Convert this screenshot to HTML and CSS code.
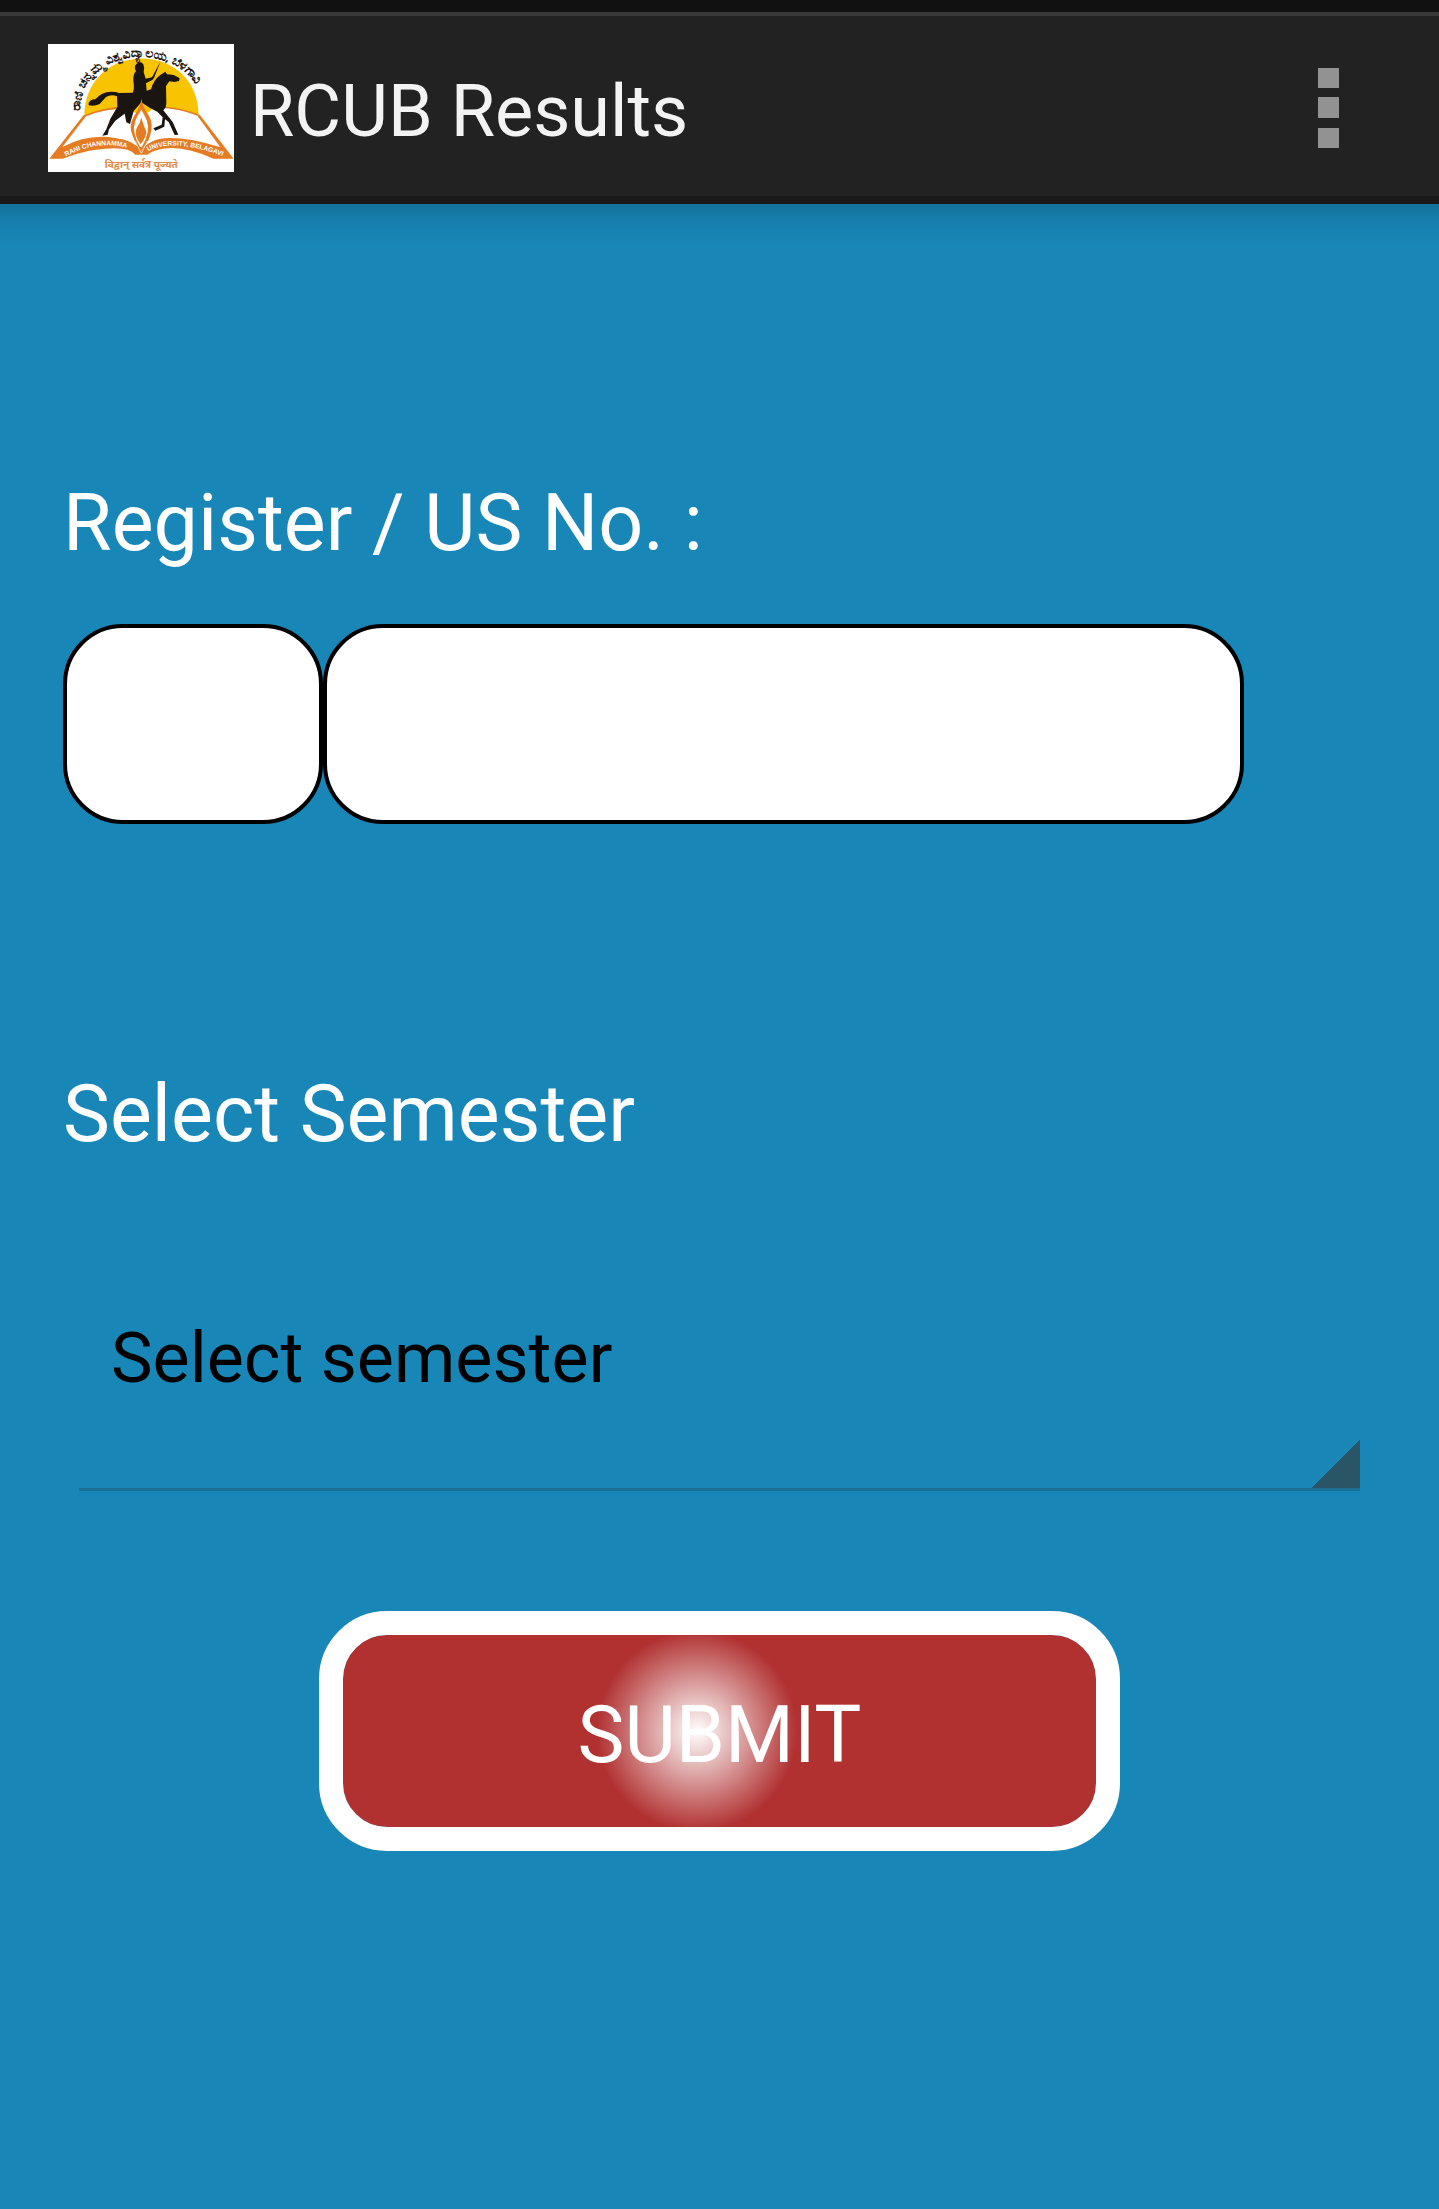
FILE: index.html
```html
<!DOCTYPE html>
<html lang="en">
<head>
  <meta charset="UTF-8">
  <meta name="viewport" content="width=device-width, initial-scale=1">
  <title>RCUB Results</title>
  <link rel="stylesheet" href="styles.css">
</head>
<body>
  <div class="status-bar"></div>
  <header class="action-bar">
    <svg class="logo" viewBox="24 24 558 384" role="img" aria-label="Rani Channamma University Belagavi">
      <defs>
        <path id="arcTop" d="M120 224 C122 8 486 8 492 232"/>
        <path id="pageLeft" d="M78 362 Q180 304 288 344"/>
        <path id="pageRight" d="M324 346 Q400 304 552 362"/>
      </defs>
      <rect x="24" y="24" width="558" height="384" fill="#fff"/>
      <!-- sun -->
      <path d="M133 240 C136 10 474 10 476 238 Q380 205 304 236 Q220 205 133 240 Z" fill="#f8c300"/>
      <!-- book -->
      <path d="M133 240 L28 368 H68 Q165 325 235 336 Q270 342 286 356 H322 Q350 336 396 336 Q460 340 520 368 H580 L476 238 Q410 212 340 215 L304 250 L260 222 Q195 216 133 240 Z" fill="#fff"/>
      <path d="M133 240 Q195 214 262 214 M348 214 Q410 212 476 238" fill="none" stroke="#e57c23" stroke-width="5"/>
      <path d="M28 368 L131 237 L138 241 L67 333 Q145 292 225 306 Q280 312 304 344 Q330 306 388 306 Q455 306 541 334 L472 239 L479 236 L581 368 H520 Q450 336 396 336 Q350 336 322 356 H286 Q270 337 222 337 Q150 337 68 368 Z" fill="#e57c23"/>
      <!-- horse and rider -->
      <path d="M146 201 Q150 191 166 190 Q184 168 214 167 Q228 167 237 171 L278 170 Q284 160 280 135 Q279 113 288 106 Q280 92 290 83 Q303 74 310 85 Q315 98 311 108 L317 128 L336 124 L362 76 L342 126 L337 132 L318 142 L320 164 L333 160 Q341 131 361 117 L376 107 L381 115 Q399 116 407 120 L419 127 L417 135 L403 138 L388 136 L378 150 L379 198 Q380 213 370 223 L398 258 L415 296 L404 297 L386 258 L375 250 L373 272 L346 284 L340 277 L365 266 L368 244 L352 227 L330 216 L304 199 L281 225 L270 264 L259 259 L254 233 L226 254 L207 280 L203 296 L187 299 L199 280 L211 248 L232 213 L231 181 Q213 174 198 183 L179 204 Q163 212 146 208 Z" fill="#1b1512"/>
      <!-- flame -->
      <path d="M304 188 Q302 212 282 240 Q264 270 278 299 Q287 326 303 344 Q322 326 330 300 Q342 264 326 238 Q308 212 304 188 Z" fill="#e57c23"/>
      <path d="M304 221 Q292 240 286 254 Q274 288 300 332 H306 Q333 286 320 253 Q314 238 304 221 Z" fill="#fff"/>
      <path d="M304 245 Q300 262 290 276 Q283 296 294 312 L302 325 Q320 302 319 286 Q309 265 304 245 Z" fill="#e57c23"/>
      <path d="M304 353 L286 315 M304 353 L322 315" stroke="#fff" stroke-width="2"/>
      <text class="logo-arc"><textPath href="#arcTop">ರಾಣಿ ಚನ್ನಮ್ಮ ವಿಶ್ವವಿದ್ಯಾಲಯ, ಬೆಳಗಾವಿ</textPath></text>
      <text class="logo-page"><textPath href="#pageLeft">RANI CHANNAMMA</textPath></text>
      <text class="logo-page"><textPath href="#pageRight">UNIVERSITY, BELAGAVI</textPath></text>
      <text class="logo-motto" x="304" y="396">विद्वान् सर्वत्र पूज्यते</text>
    </svg>
    <h1>RCUB Results</h1>
    <button type="button" class="menu-btn" aria-label="More options">
      <svg viewBox="0 0 21 80" width="21" height="80">
        <path d="M0 0h21v20H0zM0 29h21v21H0zM0 60h21v20H0z" fill="#929292"/>
      </svg>
    </button>
  </header>

  <main>
    <form>
      <label for="regNo">Register / US No. :</label>
      <div class="reg-fields">
        <input type="text" id="regPrefix" class="prefix" aria-label="Register number prefix">
        <input type="text" id="regNo" class="number">
      </div>

      <label for="semester">Select Semester</label>
      <select id="semester">
        <option>Select semester</option>
      </select>

      <button type="submit" class="submit-btn">SUBMIT</button>
    </form>
  </main>
</body>
</html>
```
FILE: styles.css
```css
*, *::before, *::after {
  box-sizing: border-box;
}
body {
  margin: 0;
  min-height: 100vh;
  background: #1887b8;
  color: #fff;
  font-family: Roboto, sans-serif;
}
/* Top bars */
.status-bar {
  height: 12px;
  background: #111;
}
.action-bar {
  display: flex;
  align-items: flex-end;
  gap: 16px;
  padding: 28px 100px 32px 48px;
  border-top: 4px solid #393939;
  background: #222;
  box-shadow: inset 0 -8px #1a1a1a;
}
.logo {
  width: 186px;
  height: 128px;
  flex: none;
}
.logo-arc {
  font: bold 37px "Noto Sans", sans-serif;
  fill: #1b1512;
}
.logo-page {
  font: bold 20px "Liberation Sans", sans-serif;
  fill: #fff;
}
.logo-motto {
  font: bold 30px "Noto Sans", sans-serif;
  fill: #e08a4a;
  text-anchor: middle;
}
h1 {
  flex: 1;
  margin: 0;
  color: #f3f3f3;
  font-size: 72px;
  font-weight: 400;
  line-height: 120px;
}
.menu-btn {
  display: flex;
  height: 128px;
  padding: 0;
  align-items: center;
  border: 0;
  background: none;
}
/* Form */
main {
  padding: 271px 63px 64px;
  background: linear-gradient(rgba(0, 0, 0, 0.16), rgba(0, 0, 0, 0.06) 40%, transparent) no-repeat 0 0 / 100% 44px;
}
form {
  display: flex;
  flex-direction: column;
}
label {
  font-size: 79px;
  line-height: 96px;
}
.reg-fields {
  display: flex;
  margin: 53px 0 242px;
  padding-right: 132px;
}
input {
  height: 200px;
  padding: 0 40px;
  border: 4px solid #000;
  border-radius: 60px;
  background: #fff;
  font: 70px Roboto, sans-serif;
}
.prefix {
  width: 260px;
}
.number {
  flex: 1;
  min-width: 0;
}
select {
  height: 265px;
  margin: 64px 16px 120px;
  padding: 2px 64px 0 32px;
  appearance: none;
  border: 0;
  border-bottom: 3px solid #1b6f95;
  border-radius: 0;
  /* corner triangle */
  background: linear-gradient(135deg, transparent 50%, #2a5566 50%) no-repeat right bottom / 48px 48px;
  color: #000;
  font: 70px Roboto, sans-serif;
}
.submit-btn {
  align-self: center;
  width: 61%;
  height: 240px;
  padding: 8px 0 0;
  border: 24px solid #fff;
  border-radius: 68px;
  background: radial-gradient(circle 100px at 47% 50%, #fff, #b13131) padding-box;
  color: #fff;
  font: 79px Roboto, sans-serif;
}
```
